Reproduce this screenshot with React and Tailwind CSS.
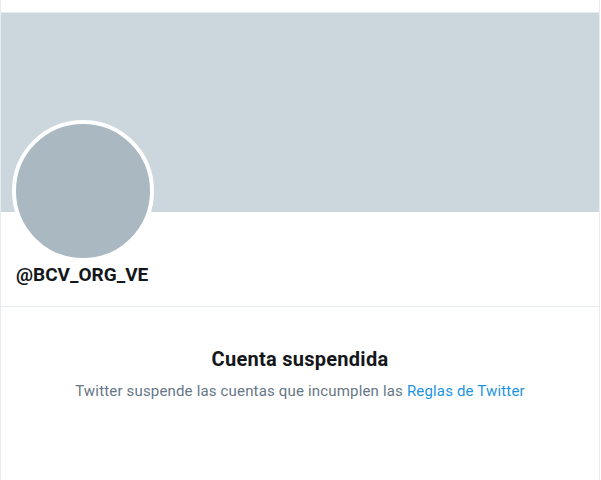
export default function App() {
  return (
    <div className="w-[601px] h-[480px] bg-white overflow-hidden" style={{ fontFamily: 'Roboto, "Liberation Sans", Arial, sans-serif' }}>
      <div className="w-[600px] h-[480px] border-x border-[#e6ecf0] flex flex-col">
        <div className="h-[13px] border-b border-[#e6ecf0] shrink-0" />
        <div className="relative h-[199px] bg-[#ccd6dd] shrink-0">
          <div className="absolute left-[11px] top-[107px] w-[142px] h-[142px] rounded-full border-4 border-white bg-[#aab8c2]" />
        </div>
        <div className="h-[95px] border-b border-[#e6ecf0] shrink-0 flex flex-col justify-end pb-[19px] pl-[15px]">
          <div className="text-[19px] font-bold text-[#14171a] leading-[24px]">@BCV_ORG_VE</div>
        </div>
        <div className="flex flex-col items-center pt-[39px]">
          <div className="text-[20px] font-bold text-[#14171a] leading-[26px] tracking-[0.27px]">Cuenta suspendida</div>
          <div className="mt-[9px] text-[15px] text-[#657786] leading-[20px] tracking-[0.17px]">
            Twitter suspende las cuentas que incumplen las <span className="text-[#1b95e0]">Reglas de Twitter</span>
          </div>
        </div>
      </div>
    </div>
  );
}
